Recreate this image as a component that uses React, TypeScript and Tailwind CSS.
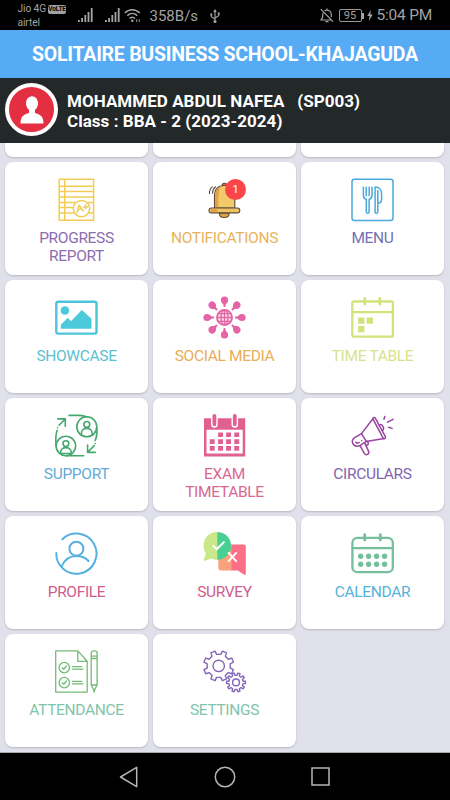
import type { ReactNode } from 'react';

type Tile = {
  label: string;
  color: string;
  icon: ReactNode;
  badge?: number;
};

// Outline of a toothed wheel: every tooth takes one equal slice of the circle
function gearPath(cx: number, cy: number, outer: number, inner: number, teeth: number, offset = 0) {
  const step = (Math.PI * 2) / teeth;
  const points: string[] = [];
  for (let i = 0; i < teeth; i++) {
    const a = i * step + offset;
    const corners: [number, number][] = [
      [inner, a - step * 0.27],
      [outer, a - step * 0.19],
      [outer, a + step * 0.19],
      [inner, a + step * 0.27],
    ];
    corners.forEach(([r, t]) => {
      points.push(`${(cx + r * Math.cos(t)).toFixed(2)} ${(cy + r * Math.sin(t)).toFixed(2)}`);
    });
  }
  return `M${points.join('L')}Z`;
}

function Icon({ color, width = 1.3, children }: { color: string; width?: number; children: ReactNode }) {
  return (
    <svg
      viewBox="0 0 43 43"
      className="block size-[43px] overflow-visible"
      fill="none"
      stroke={color}
      strokeWidth={width}
      strokeLinecap="round"
      strokeLinejoin="round"
    >
      {children}
    </svg>
  );
}

const ProgressIcon = (
  <Icon color="#f2cc55" width={1.5}>
    <path d="M4.2 1.2H38.6V42.3H4.2ZM9.7 1.2V42.3M4.2 8.2H38.6M4.2 13.4H38.6M4.2 19H38.6M4.2 24.4H20M33 24.4H38.6M4.2 29.6H18M4.2 35H19M34 35H38.6" />
    <circle cx="26.5" cy="30.6" r="8.2" fill="#fff" />
    <path d="M22 34.2L24 27.3L28.3 33M22.8 31.8L26.6 30.6M30.6 26.8V31M28.5 28.9H32.7" />
  </Icon>
);

const BellIcon = (
  <Icon color="#5c4a3d" width={1.1}>
    <path d="M16.3 35.2C16.3 41 26.2 41 26.2 35.2Z" fill="#dfa53f" />
    <circle cx="21.5" cy="7.6" r="2.4" fill="#e46b4f" />
    <path d="M11.5 30V18C11.5 11 15 7.5 21.5 7.5S31.8 11 31.8 18V30Z" fill="#f3ca68" />
    <path d="M12.1 29.5V18C12.1 12 15 9 18.5 8.3C15.5 12 15.3 17 15.3 29.5Z" fill="#dfa249" stroke="none" />
    <rect x="6" y="30" width="30.8" height="4.9" rx="2.4" fill="#efc364" />
    <path d="M8 30.7H14V34.2H8Z" fill="#dfa249" stroke="none" />
    <path d="M6.5 15.5C6.3 12.8 7.3 10.5 9.3 8.8M9.6 15.2C9.5 12.7 10.5 10.4 12.5 8.8" />
  </Icon>
);

const MenuIcon = (
  <Icon color="#49a9dc" width={1.5}>
    <rect x="1" y="1.2" width="41" height="41.2" rx="2.5" />
    <path d="M12.4 9.2V17C12.4 19.7 13.8 21 15.3 21.4V34C15.3 35.8 18.1 35.8 18.1 34V21.4C19.7 21 21 19.7 21 17V9.2M15.2 9.2V17.8M18.2 9.2V17.8" />
    <path d="M24.1 9V34C24.1 35.8 26.8 35.8 26.8 34V25.2C29 25.2 30.6 24 30.6 21.5V16C30.6 12 28.2 9 24.1 9ZM26.8 12.5V25" />
  </Icon>
);

const ShowcaseIcon = (
  <Icon color="#4cc5d8" width={2.4}>
    <rect x="1.3" y="5.8" width="40.2" height="31.8" rx="1.8" />
    <g fill="#4cc9db" stroke="none">
      <circle cx="9.9" cy="14.5" r="4.3" />
      <path d="M5.8 32.7V28.7L12.8 21.7L16 25.2L26.8 14L36.5 22.7V32.7Z" />
    </g>
  </Icon>
);

const SocialIcon = (
  <Icon color="#e268a5" width={1.3}>
    <circle cx="21.5" cy="21.5" r="7.5" fill="#fbdcec" strokeWidth="1.9" />
    <ellipse cx="21.5" cy="21.5" rx="3.5" ry="7.5" />
    <path d="M21.5 14V29M14 21.5H29M15.2 17.6H27.8M15.2 25.4H27.8" />
    {[0, 45, 90, 135, 180, 225, 270, 315].map((angle) => (
      <g key={angle} transform={`rotate(${angle} 21.5 21.5)`} fill="#e563a6" stroke="none">
        <circle cx="39" cy="21.5" r="3.6" />
        <path d="M37 18.4L34.2 20.5H32V22.5H34.2L37 24.6Z" />
      </g>
    ))}
  </Icon>
);

const TimeTableIcon = (
  <Icon color="#d3e27b" width={2.3}>
    <rect x="1.3" y="5.5" width="40.6" height="35.2" rx="1.5" />
    <path d="M1.3 16.1H41.9" />
    <path d="M13.8 2.5V8M28.8 2.5V8" strokeWidth="2.8" />
    <g fill="#d3e27b" stroke="none">
      <path d="M7.1 21.4h6.3v6.3h-6.3zM15.7 21.4h6.3v6.3h-6.3zM7.1 29.9h6.3v6.3h-6.3z" />
    </g>
  </Icon>
);

const SupportIcon = (
  <Icon color="#45a76c" width={1.6}>
    <circle cx="31.8" cy="12.8" r="10" />
    <circle cx="10.9" cy="32" r="9.8" />
    <circle cx="31.8" cy="10.4" r="2.9" />
    <path d="M26.4 20.8V19.5C26.4 12.7 37.2 12.7 37.2 19.5V20.8" />
    <circle cx="10.9" cy="29.6" r="2.9" />
    <path d="M5.5 40V38.7C5.5 31.9 16.3 31.9 16.3 38.7V40M5.5 39.5H16.3" />
    <path d="M14 1.4H23C26.5 1.4 29 2 31.8 2.8M41.8 13.5C42.3 19 41.7 23 40.2 26.5M28.8 41.7H20C16.5 41.7 13.5 41.5 10.9 41.8M1.1 32C.4 25 .7 20.5 2.1 16.3" />
    <path d="M2.8 4.9H10.3V12.2M10 5.2L4 11.3M40.2 38.4H32.6V31M33 38L39.2 31.6M2.6 13.7V13.8M40.2 29.5V29.6" />
  </Icon>
);

const ExamIcon = (
  <Icon color="#e0608f" width={2.4}>
    <path d="M1 4.3H42.2V42.5H1Z" fill="#e0608f" stroke="none" />
    <path d="M3.5 15.8H39.7V39.6H3.5Z" fill="#fff" stroke="none" />
    <path d="M11.4 2V10.4M31.8 2V10.4" stroke="#fff" strokeWidth="6.6" />
    <path d="M11.4 1.8V10.2M31.8 1.8V10.2" strokeWidth="3.8" />
    <g fill="#e0608f" stroke="none">
      <path d="M15.1 18.4h4.9v4.7h-4.9zM23.1 18.4h4.9v4.7h-4.9zM31.3 18.4h4.9v4.7h-4.9z" />
      <path d="M6.8 25.2h4.9v4.7h-4.9zM15.1 25.2h4.9v4.7h-4.9zM23.1 25.2h4.9v4.7h-4.9zM31.3 25.2h4.9v4.7h-4.9z" />
      <path d="M6.8 32h4.9v4.7h-4.9zM15.1 32h4.9v4.7h-4.9zM23.1 32h4.9v4.7h-4.9zM31.3 32h4.9v4.7h-4.9z" />
    </g>
  </Icon>
);

const CircularsIcon = (
  <Icon color="#98459f" width={1.5}>
    <path d="M10.5 19.6L21.9 4.8M15.3 27.4L33 24.4M10.5 19.6L15.3 27.4" />
    <path d="M21.9 4.8C22 3.4 23.6 3.1 24.3 4.2L34.4 22.6C35 24.2 33.5 25.2 32.3 24.3Z" />
    <path d="M10.5 19.6L4 23.4C-1.2 27 2.1 33.8 8.5 31.8L15.3 27.4" />
    <path d="M9 31.6L13.3 39.4C15 42.1 18.8 40.2 17.5 37.1L14 29.4M14.5 31.2C17.3 31.8 18 29.6 16.6 27.4" />
    <path d="M28.3 11C30.8 9.4 34.2 13.7 31.6 16.4M33 5.3L33.8 2.4M36.4 8.2L42.1 5.3M37.6 13.3L41.1 14.4" />
    <path d="M4.8 28.2C6 29.5 7.2 29.3 8.3 28.5M10.8 26.7V26.8" />
  </Icon>
);

const ProfileIcon = (
  <Icon color="#55b1df" width={2}>
    <path d="M7.4 7.2A20.1 20.1 0 1 1 1.3 21" />
    <circle cx="21.4" cy="16.7" r="7" />
    <path d="M6.7 34.3C9.5 27.5 14.5 23.9 21.4 23.9C26.5 23.9 30.5 25.5 33.6 29" />
  </Icon>
);

const SurveyIcon = (
  <Icon color="#fff" width={2}>
    <g stroke="none">
      <path d="M15.3 12.6H29V38.5H18C16.3 38.5 15.3 37.6 15.3 36Z" fill="#faa27c" />
      <path d="M28.5 12.6H40.7C42 12.6 42.8 13.4 42.8 14.7V41.5C42.8 42.8 41.8 43.1 40.8 42.4L34.8 38.5H28.5Z" fill="#fb7087" />
      <path d="M14.2 0C6 0 .6 6 .6 13.8C.6 17 1.5 19.5 3 21.7L.7 27.2C.4 28.3 1 28.9 2 28.7L8.3 26.5C10.2 27.5 12 27.8 14.2 27.8Z" fill="#c9e888" />
      <path d="M14.2 0A13.9 13.9 0 0 1 14.2 27.8Z" fill="#48cf93" />
    </g>
    <path d="M10.4 13.9L13.7 17.3L20.8 10.3" />
    <path d="M25.6 20.9L33.2 29.1M33.2 20.9L25.6 29.1" />
  </Icon>
);

const CalendarIcon = (
  <Icon color="#76bf9e" width={2.3}>
    <rect x="1.4" y="5.8" width="40.4" height="34.4" rx="5" />
    <path d="M1.4 16.2H41.8" />
    <path d="M13.7 2.7V8M29.3 2.7V8" strokeWidth="2.8" />
    {[24.2, 32.2].map((cy) =>
      [9.7, 17.6, 25.6, 33.6].map((cx) => (
        <circle key={`${cx}-${cy}`} cx={cx} cy={cy} r="2.7" fill="#76bf9e" stroke="none" />
      )),
    )}
  </Icon>
);

const AttendanceIcon = (
  <Icon color="#74bb76" width={1.3}>
    <path d="M.7 .9H22.8L32.2 11.3V42.1H.7ZM22.8 .9V11.3H32.2" />
    <circle cx="9.3" cy="17.6" r="5.2" />
    <circle cx="9.3" cy="32.6" r="5.2" />
    <path d="M7.2 17.7L8.7 19.2L11.5 16M7.2 32.7L8.7 34.2L11.5 31" />
    <path d="M17.5 16.6H26.8M17.5 19.1H28M17.5 31.4H26.8M17.5 33.8H28" />
    <path d="M36.2 35V3C36.2 .2 42.1 .2 42.1 3V35L39.8 39.5L39.2 42.2L38.5 39.5ZM36.2 6.2H42.1M36.2 8.5H42.1M36.2 35H42.1M38.5 39.5H39.8" />
  </Icon>
);

const SettingsIcon = (
  <Icon color="#8467b9" width={1.4}>
    <path d={gearPath(15.7, 15.9, 15.2, 11.7, 8, Math.PI / 8)} />
    <circle cx="15.7" cy="15.9" r="5.7" />
    <path d={gearPath(33, 32.4, 9.5, 7.2, 10)} fill="#fff" />
    <circle cx="33" cy="32.4" r="3.4" />
  </Icon>
);

const TILES: Tile[] = [
  { label: 'PROGRESS REPORT', color: 'text-[#8d6dae]', icon: ProgressIcon },
  { label: 'NOTIFICATIONS', color: 'text-[#e8b35c]', icon: BellIcon, badge: 1 },
  { label: 'MENU', color: 'text-[#7272b3]', icon: MenuIcon },
  { label: 'SHOWCASE', color: 'text-[#5bbfcf]', icon: ShowcaseIcon },
  { label: 'SOCIAL MEDIA', color: 'text-[#e8ae58]', icon: SocialIcon },
  { label: 'TIME TABLE', color: 'text-[#d7e38c]', icon: TimeTableIcon },
  { label: 'SUPPORT', color: 'text-[#62abd8]', icon: SupportIcon },
  { label: 'EXAM TIMETABLE', color: 'text-[#d96791]', icon: ExamIcon },
  { label: 'CIRCULARS', color: 'text-[#8166ae]', icon: CircularsIcon },
  { label: 'PROFILE', color: 'text-[#cf5d8b]', icon: ProfileIcon },
  { label: 'SURVEY', color: 'text-[#cf5d8b]', icon: SurveyIcon },
  { label: 'CALENDAR', color: 'text-[#55b3d9]', icon: CalendarIcon },
  { label: 'ATTENDANCE', color: 'text-[#7fc5aa]', icon: AttendanceIcon },
  { label: 'SETTINGS', color: 'text-[#7fc5aa]', icon: SettingsIcon },
];

function SignalBars() {
  return (
    <svg viewBox="0 0 15 15" className="h-[15px] w-[15px]" fill="#a5a5a5">
      <path d="M0 12h1.8v2H0zM3.2 10h1.8v4H3.2zM6.4 7h1.8v7H6.4zM9.6 4h1.8v10H9.6zM12.8 0h1.8v14h-1.8z" />
    </svg>
  );
}

function StatusBar() {
  return (
    <div className="flex h-[30px] shrink-0 items-center bg-black pt-px pl-[17.5px] text-[#a2a2a2]">
      <div className="w-[60px] pt-px text-[10.2px] leading-[14px] tracking-[-0.1px]">
        <div className="flex items-center gap-[2px]">
          <span className="whitespace-nowrap">Jio 4G</span>
          <span className="flex h-[9px] w-[18px] items-center justify-center rounded-[2px] bg-[#a2a2a2] text-[6.5px] leading-none font-bold text-black">
            VoLTE
          </span>
        </div>
        <div>airtel</div>
      </div>
      <SignalBars />
      <div className="ml-[12px] flex">
        <SignalBars />
      </div>
      <svg viewBox="0 0 18 15" className="ml-[4px] h-[15px] w-[18px]" fill="none" stroke="#a5a5a5" strokeWidth="1.5">
        <path d="M.8 5C5 .6 11.5 .6 15.8 5M3.3 7.8C6.3 4.8 10.3 4.8 13.3 7.8M5.6 10.5C7.3 8.9 9.3 8.9 11 10.5" />
        <circle cx="8.3" cy="12.8" r="1.2" fill="#a5a5a5" stroke="none" />
        <path d="M12.7 11.2V14M15.2 11.2V14" strokeWidth=".9" />
      </svg>
      <span className="ml-[8px] w-[60px] pt-px text-[15px] leading-none whitespace-nowrap">358B/s</span>
      <svg viewBox="0 0 10 14" className="h-[14px] w-[10px]" fill="none" stroke="#a5a5a5" strokeWidth="1.1">
        <path d="M5 2V12M5 10L1.3 7.8V5.5M5 9L8.7 6.8V4.5" />
        <path d="M5 0L6.8 3H3.2Z" fill="#a5a5a5" stroke="none" />
        <circle cx="5" cy="12.4" r="1.5" fill="#a5a5a5" stroke="none" />
        <path d="M.3 4.5h2v2h-2zM7.7 3.5h2v2h-2z" fill="#a5a5a5" stroke="none" />
      </svg>
      <svg viewBox="0 0 14 15" className="ml-[100px] h-[15px] w-[14px]" fill="none" stroke="#a5a5a5" strokeWidth="1.2">
        <path d="M.8 1.2L13 13.6M3.2 4.8C2.5 6 2.6 8 2.6 9.5L1 12H11.3M4.7 3C5.5 2.3 6.2 2.2 7 2.2C10 2.2 11.3 4.5 11.3 7V9.3M7 .5V2.2M5.5 13.6H8.5" />
      </svg>
      <div className="ml-[5px] flex h-[13px] w-[23px] items-center justify-center rounded-[2px] border border-[#999] text-[11px] leading-none">
        95
      </div>
      <div className="h-[6px] w-[2px] bg-[#a5a5a5]" />
      <svg viewBox="0 0 6 11" className="ml-[3px] h-[11px] w-[6px]" fill="#a5a5a5">
        <path d="M3.8 0L.3 6H2.6L1.8 11L5.8 4.6H3.4Z" />
      </svg>
      <span className="ml-[4px] pt-px text-[15.5px] leading-none tracking-[-0.2px] whitespace-nowrap">5:04 PM</span>
    </div>
  );
}

function StudentHeader() {
  return (
    <div className="flex h-[65px] shrink-0 items-center bg-[#232829] pl-[5px] text-white">
      <div className="mt-[-2px] flex size-[53px] items-center justify-center rounded-full border-[4.5px] border-white bg-[#e42f42]">
        <svg viewBox="0 0 24 28" className="h-[28px] w-[24px]" fill="#fff">
          <ellipse cx="12" cy="7.5" rx="6" ry="7.3" />
          <path d="M9 12H15V17C19 18.5 23.5 19 23.5 27.5H.5C.5 19 5 18.5 9 17Z" />
        </svg>
      </div>
      <div className="ml-[9px] pt-px text-[17px] leading-5 font-bold tracking-[0.04px] whitespace-pre">
        <div>{'MOHAMMED ABDUL NAFEA   (SP003)'}</div>
        <div>Class : BBA - 2 (2023-2024)</div>
      </div>
    </div>
  );
}

function TileCard({ tile }: { tile: Tile }) {
  return (
    <div className="flex h-[113px] flex-col items-center rounded-lg bg-white pt-4 shadow-[0_1px_2px_rgba(60,60,80,0.25)]">
      <div className="relative">
        {tile.icon}
        {tile.badge !== undefined && (
          <span className="absolute top-[1px] left-[22px] flex size-[21px] items-center justify-center rounded-full bg-[#fb4548] text-[11px] leading-none text-white">
            {tile.badge}
          </span>
        )}
      </div>
      <div className={`mt-[9px] w-[110px] text-center text-[15.5px] leading-[17.5px] tracking-[-0.33px] ${tile.color}`}>
        {tile.label}
      </div>
    </div>
  );
}

export default function App() {
  return (
    <div className="flex h-[800px] w-[450px] flex-col overflow-hidden bg-[#e1e1eb] font-[Roboto,sans-serif]">
      <StatusBar />
      <div className="flex h-12 shrink-0 items-center justify-center bg-[#57abf4] pt-[2px] text-[19.5px] font-bold tracking-[-0.25px] whitespace-nowrap text-white">
        SOLITAIRE BUSINESS SCHOOL-KHAJAGUDA
      </div>
      <StudentHeader />

      {/* Scrolled to the end, so only the bottom edge of the first row shows */}
      <main className="flex min-h-0 flex-1 flex-col justify-end overflow-hidden border-b border-[#aaaab0] pr-[6px] pb-[5px] pl-[5px]">
        <div className="grid grid-cols-3 gap-[5px]">
          {[0, 1, 2].map((i) => (
            <div key={i} className="h-[113px] rounded-lg bg-white shadow-[0_1px_2px_rgba(60,60,80,0.25)]" />
          ))}
          {TILES.map((tile) => (
            <TileCard key={tile.label} tile={tile} />
          ))}
        </div>
      </main>

      {/* Navigation Bar */}
      <nav className="flex h-[47px] shrink-0 items-center justify-between bg-black pr-[120px] pl-[119px]">
        <svg viewBox="0 0 20 22" className="h-[22px] w-[20px]" fill="none" stroke="#b5b5b5" strokeWidth="1.5" strokeLinejoin="round">
          <path d="M1.5 11L17.7 1.3V20.7Z" />
        </svg>
        <svg viewBox="0 0 22 22" className="size-[22px]" fill="none" stroke="#b5b5b5" strokeWidth="1.5">
          <circle cx="11" cy="11" r="9.7" />
        </svg>
        <svg viewBox="0 0 19 19" className="size-[19px]" fill="none" stroke="#b5b5b5" strokeWidth="1.5">
          <path d="M1 1H18V18H1Z" />
        </svg>
      </nav>
    </div>
  );
}
